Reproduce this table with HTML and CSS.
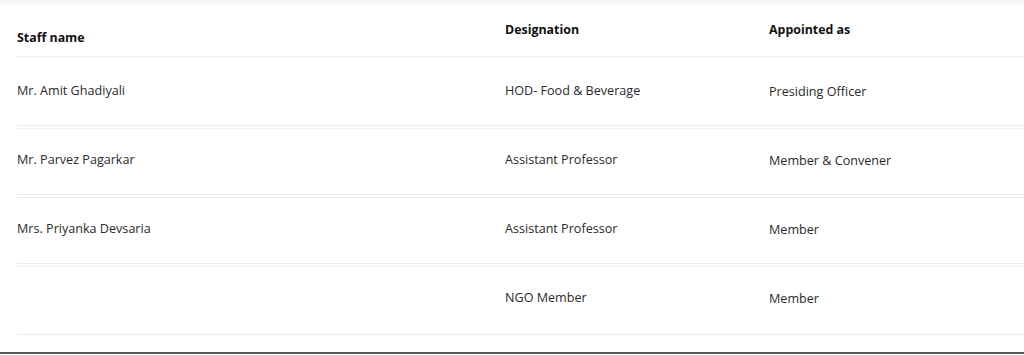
FILE: index.html
```html
<!DOCTYPE html>
<html lang="en">
<head>
<meta charset="utf-8">
<title>Committee</title>
<link rel="stylesheet" href="styles.css">
</head>
<body>
<div class="page">
  <div class="topshade"></div>
  <div class="table">
    <div class="head">
      <div class="hcell hname">Staff name</div>
      <div class="hcell">Designation</div>
      <div class="hcell">Appointed as</div>
    </div>
    <div class="row first">
      <div class="cell">Mr. Amit Ghadiyali</div>
      <div class="cell">HOD- Food &amp; Beverage</div>
      <div class="cell c3">Presiding Officer</div>
    </div>
    <div class="row">
      <div class="cell">Mr. Parvez Pagarkar</div>
      <div class="cell">Assistant Professor</div>
      <div class="cell c3">Member &amp; Convener</div>
    </div>
    <div class="row">
      <div class="cell">Mrs. Priyanka Devsaria</div>
      <div class="cell">Assistant Professor</div>
      <div class="cell c3">Member</div>
    </div>
    <div class="row last">
      <div class="cell"></div>
      <div class="cell">NGO Member</div>
      <div class="cell c3">Member</div>
    </div>
  </div>
  <div class="bottomrule"></div>
</div>
</body>
</html>
```

FILE: styles.css
```css
html, body {
  margin: 0;
  padding: 0;
  background: #ffffff;
}

body {
  font-family: "Open Sans", "Liberation Sans", sans-serif;
  font-size: 12.6px;
  color: #2a2a2a;
  overflow: hidden;
}

.page {
  width: 1024px;
  height: 355px;
  position: relative;
}

.topshade {
  position: absolute;
  left: 0;
  top: 0;
  width: 100%;
  height: 7px;
  background: linear-gradient(#f3f3f3, rgba(255, 255, 255, 0));
}

.table {
  margin-left: 17px;
  display: flex;
  flex-direction: column;
}

.head,
.row {
  display: grid;
  grid-template-columns: 488px 264px 1fr;
}

.head {
  height: 56px;
  border-bottom: 2px solid #f2f2f2;
}

.hcell {
  font-size: 12.4px;
  font-weight: 700;
  color: #111111;
  line-height: 16px;
  padding-top: 22px;
}

.hcell.hname {
  padding-top: 30px;
}

.row {
  height: 65px;
  border-top: 1px solid #f0f0f0;
  border-bottom: 1px solid #ebebeb;
  margin-top: 2px;
}

.row.first {
  height: 67px;
  border-top: none;
  margin-top: 0;
}

.row.last {
  height: 67px;
}

.cell {
  line-height: 16px;
  padding-top: 23px;
}

.row.first .cell {
  padding-top: 25px;
}

.cell.c3,
.row.first .cell.c3 {
  margin-top: 1px;
}

.bottomrule {
  position: absolute;
  left: 0;
  right: 0;
  top: 352px;
  height: 2px;
  background: #555555;
}
```
